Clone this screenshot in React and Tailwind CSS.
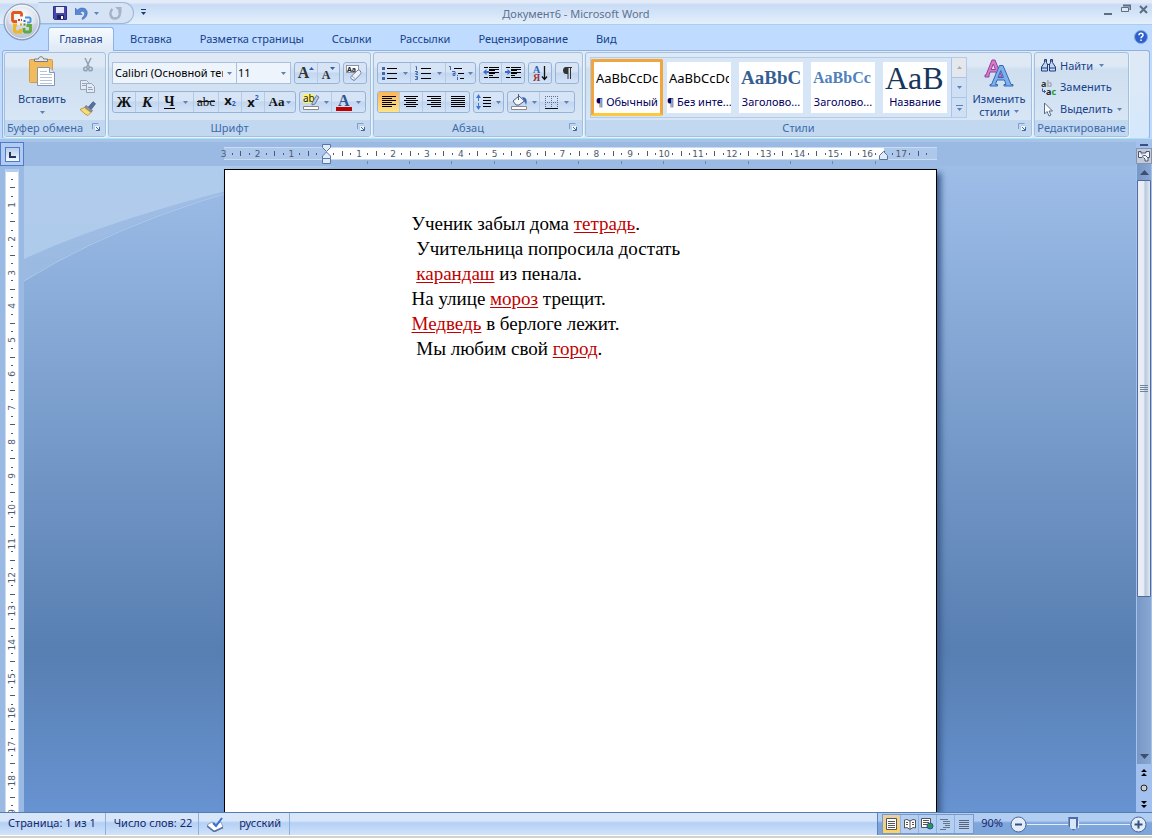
import { useState } from "react";

const tabs = ["Вставка", "Разметка страницы", "Ссылки", "Рассылки", "Рецензирование", "Вид"];

const styleItems = [
    { name: "¶ Обычный", sample: "AaBbCcDc", look: "text-[13px] text-black", active: true },
    { name: "¶ Без инте...", sample: "AaBbCcDc", look: "text-[13px] text-black" },
    { name: "Заголово...", sample: "AaBbCc", look: "font-['Liberation_Serif',serif] text-[19px] font-bold text-[#365f91]" },
    { name: "Заголово...", sample: "AaBbCc", look: "font-['Liberation_Serif',serif] text-[16px] font-bold text-[#4f81bd]" },
    { name: "Название", sample: "AaB", look: "font-['Liberation_Serif',serif] text-[32px] text-[#17365d]" },
];

const lines = [
    ["Ученик забыл дома ", "тетрадь", "."],
    [" Учительница попросила достать", "", ""],
    [" ", "карандаш", " из пенала."],
    ["На улице ", "мороз", " трещит."],
    ["", "Медведь", " в берлоге лежит."],
    [" Мы любим свой ", "город", "."],
];

function Arrow({ className = "text-[#5b83b8]" }) {
    return (
        <svg width="5" height="3" viewBox="0 0 5 3" className={`shrink-0 ${className}`} fill="currentColor">
            <path d="M0 0h5L2.5 3z" />
        </svg>
    );
}

function Launcher() {
    return (
        <button aria-label="Параметры" className="absolute right-[5px] top-[3px] text-[#7f9dc9]">
            <svg width="8" height="8" viewBox="0 0 8 8" fill="none" stroke="currentColor">
                <path d="M.5 6V.5H6.500" />
                <path d="M2.500 7.500v-5h5v5z" fill="#eef5fc" stroke="#b9cfe9" />
                <path d="M4 4l3 3M7.500 4v3.500H4" stroke="#42689c" />
            </svg>
        </button>
    );
}

function Group({ title, launcher, className = "", children }) {
    return (
        <section className={`flex shrink-0 flex-col overflow-hidden rounded-[3px] border border-[#a3c0de] bg-linear-to-b from-[#dee9f5] from-15% via-[#cfdff0] via-20% to-[#dae8f7] shadow-[1px_1px_0_#eaf4fd] ${className}`}>
            <div className="flex min-h-0 flex-1">{children}</div>
            <div className="relative h-4 bg-[#c1d8f0] text-center leading-4 text-[#3e6aaa]">
                <span className={launcher ? "pr-5" : ""}>{title}</span>
                {launcher && <Launcher />}
            </div>
        </section>
    );
}

function Bar({ className = "", children }) {
    return (
        <div className={`flex h-[22px] divide-x divide-[#b4cbe8] overflow-hidden rounded-[3px] border border-[#96b4da] bg-linear-to-b from-[#d6e4f5] from-45% via-[#c3d6ef] via-50% to-[#d3e4f8] ${className}`}>
            {children}
        </div>
    );
}

function Tool({ label, arrow, className = "w-[23px]", children }) {
    return (
        <button aria-label={label} className={`flex h-full items-center justify-center gap-1 ${className}`}>
            {children}
            {arrow && <Arrow />}
        </button>
    );
}

// rows: list of [x, y, width] strokes
function Lines({ rows, w = 16, h = 14, color = "#000", children }) {
    return (
        <svg width={w} height={h} viewBox={`0 0 ${w} ${h}`} className="shrink-0">
            {rows.map(([x, y, len], i) => (
                <rect key={i} x={x} y={y} width={len} height="1" fill={color} />
            ))}
            {children}
        </svg>
    );
}

function OfficeLogo() {
    return (
        <svg width="38" height="38" viewBox="0 0 38 38">
            <defs>
                <radialGradient id="orb" cx=".5" cy=".35" r=".65">
                    <stop offset="0" stopColor="#fff" />
                    <stop offset=".55" stopColor="#dfe5ee" />
                    <stop offset="1" stopColor="#98a9c3" />
                </radialGradient>
            </defs>
            <circle cx="19" cy="19" r="18" fill="url(#orb)" stroke="#8294b2" />
            <path d="M3 20a16 16 0 0 0 32 0c-9 3-23 3-32 0z" fill="#c3cddd" opacity=".6" />
            <circle cx="19" cy="19" r="16.500" fill="none" stroke="#fff" opacity=".7" />
            <g fill="none" strokeWidth="2.800">
                <path d="M14 18.500H10.500L9.500 17.500v-7l1-1h7l1 1v3" stroke="#e2571b" />
                <path d="M22 14.500h4.500l1 1v3l-1 1H24" stroke="#4a94dd" strokeWidth="2" />
                <path d="M14 22h-2.500v6l1 1h5v-3" stroke="#f2b51c" />
                <path d="M23.500 22.500h4V28l-1 1h-4.500l-1-1v-3" stroke="#62a93a" />
            </g>
            <path d="M15 16h2v2h-2zM18 16h1v2h-1z" fill="#d8420f" />
            <path d="M20.500 17h2v2h-2z" fill="#2c6cc0" />
            <path d="M17 20.500h2v2h-2z" fill="#e89b12" />
            <path d="M20.500 20.500h2v2h-2z" fill="#47912a" />
        </svg>
    );
}

function TitleBar() {
    return (
        <header className="relative flex h-[25px] shrink-0 items-center border-b border-[#a9cdf3] bg-linear-to-b from-[#e3ecf8] from-10% via-[#c8dcf5] via-20% to-[#e4effb]">
            <div className="ml-[38px] mt-0.5 flex h-[22px] w-24 items-center rounded-r-full border border-[#9db8db] border-l-transparent bg-[#d5e3f5] pl-3.5">
                <button aria-label="Сохранить" className="mr-2">
                    <svg width="14" height="14" viewBox="0 0 14 14">
                        <path d="M.5.5h13v13h-12l-1-1z" fill="#4846a8" stroke="#312f86" />
                        <path d="M3 1h8v6H3z" fill="#e6eaf9" />
                        <path d="M4 9h7v4H4z" fill="#22205c" />
                        <path d="M8 10h2v3H8z" fill="#fff" />
                    </svg>
                </button>
                <button aria-label="Отменить" className="mr-1.5 flex items-center gap-1.5">
                    <svg width="13" height="13" viewBox="0 0 13 13">
                        <path d="M0 1l2.500 2C5 .5 9 .5 11 2.500c2.500 3 1 8-3.500 10L7 11c2.500-2 3.500-4.500 2-6C8 4 6.500 4.200 5 5.200L7 7.500H0z" fill="#5a86d6" stroke="#3c66b8" strokeWidth=".6" />
                    </svg>
                    <Arrow />
                </button>
                <button aria-label="Повторить" className="ml-1">
                    <svg width="13" height="13" viewBox="0 0 13 13" fill="none">
                        <path d="M3.500 2C0 5 1 11.500 6 11.500c4 0 6-4 4-8" stroke="#a5b2c7" strokeWidth="2.400" />
                        <path d="M6 0h6.500v6.500z" fill="#a5b2c7" />
                    </svg>
                </button>
            </div>
            <button aria-label="Настройка панели быстрого доступа" className="ml-[7px] flex flex-col items-center gap-0.5">
                <span className="h-px w-[5px] bg-[#1c3c75]" />
                <Arrow className="text-[#1c3c75]" />
            </button>
            <h1 className="pointer-events-none absolute inset-x-0 pt-1 text-center leading-4 text-[#5c7290]">
                Документ6 - Microsoft Word
            </h1>
            <div className="ml-auto mr-1 flex items-center gap-2 pb-1.5">
                <button aria-label="Свернуть" className="flex h-3 w-[9px] items-end"><span className="h-0.5 w-2 bg-[#5f6d80]" /></button>
                <button aria-label="Восстановить">
                    <svg width="10" height="10" viewBox="0 0 10 10" fill="none" stroke="#5f6d80">
                        <path d="M2 1.500h7.500V6" strokeWidth="2" />
                        <path d="M.5 3.500h7v4h-7z" fill="#dce8f7" />
                    </svg>
                </button>
                <button aria-label="Закрыть">
                    <svg width="9" height="9" viewBox="0 0 9 9" stroke="#5f6d80" strokeWidth="2">
                        <path d="M1 1l7 7M8 1L1 8" />
                    </svg>
                </button>
            </div>
        </header>
    );
}

function TabRow() {
    return (
        <nav className="flex h-[25px] shrink-0 items-end pl-12 pr-1 text-[#15428b]">
            <button className="z-10 -mb-px h-6 w-[66px] rounded-t-[3px] border border-b-0 border-[#8db2e3] bg-linear-to-b from-[#f5fafe] to-[#dfe9f5]">
                Главная
            </button>
            <div className="ml-0.5 flex h-6">
                {tabs.map((tab) => (
                    <button key={tab} className="px-3.5 pt-0.5">{tab}</button>
                ))}
            </div>
            <button aria-label="Справка" className="mb-1.5 ml-auto">
                <svg width="14" height="14" viewBox="0 0 14 14">
                    <circle cx="7" cy="7" r="6.500" fill="#2b5fd0" stroke="#8aa6d8" />
                    <path d="M5 5.200C5 2.700 9 2.700 9 5.200 9 6.700 7 6.700 7 8.300M7 9.500v1.500" fill="none" stroke="#fff" strokeWidth="1.500" />
                </svg>
            </button>
        </nav>
    );
}

function ClipboardGroup() {
    return (
        <Group title="Буфер обмена" launcher className="w-[102px]">
            <button className="flex w-[74px] flex-col items-center pt-[3px] text-[#15428b]">
                <svg width="28" height="31" viewBox="0 0 28 31">
                    <path d="M2.500 3.500h21a1 1 0 0 1 1 1v21a1 1 0 0 1-1 1h-21a1 1 0 0 1-1-1v-21a1 1 0 0 1 1-1z" fill="#f1bb5c" stroke="#d39b45" />
                    <path d="M6.500 5.500V3h4c0-3 5-3 5 0h4v2.500z" fill="#e9e9e9" stroke="#77797d" />
                    <path d="M9.500 11.500h12l5 5v13h-17z" fill="#fff" stroke="#8396b4" />
                    <path d="M21.500 11.500v5h5" fill="#dce6f4" stroke="#8396b4" />
                    <path d="M12 15.500h7M12 18.500h12M12 21.500h12M12 24.500h12M12 27.500h12" stroke="#b5c3d8" />
                </svg>
                <span className="mt-1 leading-4">Вставить</span>
                <Arrow className="mt-1 text-[#5b83b8]" />
            </button>
            <div className="flex flex-col items-center gap-2 pt-[5px]">
                <button aria-label="Вырезать">
                    <svg width="10" height="14" viewBox="0 0 10 14" fill="none" stroke="#93a1b5" strokeWidth="1.500">
                        <path d="M2 0l4.500 9.500M8 0L3.500 9.500" />
                        <circle cx="2.500" cy="11" r="1.800" />
                        <circle cx="7.500" cy="11" r="1.800" />
                    </svg>
                </button>
                <button aria-label="Копировать">
                    <svg width="15" height="13" viewBox="0 0 15 13" fill="#e3eaf4" stroke="#94a4ba">
                        <path d="M.5.5h6l2 2v7h-8z" />
                        <path d="M2 3.500h4M2 5.500h4" />
                        <path d="M6.500 3.500h5l3 3v6h-8z" />
                        <path d="M8 7.500h4M8 9.500h5" />
                    </svg>
                </button>
                <button aria-label="Формат по образцу">
                    <svg width="17" height="15" viewBox="0 0 17 15">
                        <path d="M9.500 6L14 .7l2.500 2L12.500 8z" fill="#5473a5" stroke="#344f7c" strokeWidth=".7" />
                        <path d="M7 4.500l6.500 5-1.500 2-6.500-5z" fill="#8d93a0" stroke="#5d6677" strokeWidth=".7" />
                        <path d="M5.500 6.500l6.500 5-3 3L6 13 1 8.500z" fill="#f7da7a" stroke="#b08a34" strokeWidth=".8" />
                    </svg>
                </button>
            </div>
        </Group>
    );
}

function FontGroup() {
    const [font, setFont] = useState("Calibri (Основной текст)");
    const [size, setSize] = useState("11");

    return (
        <Group title="Шрифт" launcher className="w-[263px]">
            <div className="flex flex-col gap-[7px] px-[3px] pt-[9px]">
                <div className="flex gap-[3px]">
                    <div className="flex h-[22px] divide-x divide-[#a9c1de] border border-[#a9c1de] bg-[#eef4fb]">
                        <div className="flex w-[124px] items-center gap-1 pr-1">
                            <select
                                aria-label="Шрифт"
                                value={font}
                                onChange={(e) => setFont(e.target.value)}
                                className="w-0 flex-1 appearance-none overflow-hidden pl-0.5 text-[11px] text-clip text-black outline-none"
                            >
                                <option>Calibri (Основной текст)</option>
                                <option>Times New Roman</option>
                            </select>
                            <Arrow />
                        </div>
                        <div className="flex w-[53px] items-center pr-1">
                            <select
                                aria-label="Размер шрифта"
                                value={size}
                                onChange={(e) => setSize(e.target.value)}
                                className="w-0 flex-1 appearance-none pl-px text-[11px] text-black outline-none"
                            >
                                <option>11</option>
                                <option>14</option>
                            </select>
                            <Arrow />
                        </div>
                    </div>
                    <Bar className="font-['Liberation_Serif',serif] font-bold">
                        <Tool label="Увеличить размер">
                            <span className="text-[16px] leading-4 text-[#333]">A</span>
                            <Arrow className="-ml-1 mb-2.5 rotate-180 text-[#2f5fae]" />
                        </Tool>
                        <Tool label="Уменьшить размер" className="w-[21px]">
                            <span className="pt-1 text-[12px] leading-4 text-[#333]">A</span>
                            <Arrow className="-ml-1 mb-2.5 text-[#2f5fae]" />
                        </Tool>
                    </Bar>
                    <Bar>
                        <Tool label="Очистить формат" className="w-[22px]">
                            <svg width="18" height="16" viewBox="0 0 18 16" className="overflow-visible">
                                <rect x=".5" y=".5" width="12" height="7" fill="#fff" stroke="#8796ad" />
                                <text x="1" y="7" fontSize="7" fontWeight="bold" fill="#222">Aa</text>
                                <path d="M5 11.500l7-6.500q1-.5 2 .5l1 2q0 1-1 2l-5 5.500q-1 .5-2 0l-2-1.500q-.7-1 0-2z" fill="#eef2f8" stroke="#6c7f9e" />
                                <path d="M6 11l4 3.500" stroke="#9aa9c0" />
                            </svg>
                        </Tool>
                    </Bar>
                </div>
                <div className="flex gap-[3px] text-[#111]">
                    <Bar className="w-[184px] font-['Liberation_Serif',serif] font-bold">
                        <Tool label="Полужирный"><span className="text-[15px]">Ж</span></Tool>
                        <Tool label="Курсив"><span className="text-[15px] italic">К</span></Tool>
                        <Tool label="Подчеркнутый" arrow className="w-[35px]">
                            <span className="border-b border-black text-[14px] leading-3">Ч</span>
                            <span />
                        </Tool>
                        <Tool label="Зачеркнутый" className="w-[25px]"><span className="text-[13px] font-normal line-through">abc</span></Tool>
                        <Tool label="Подстрочный знак"><span className="flex font-['Noto_Sans',sans-serif] text-[13px] leading-4">x<small className="pt-1 text-[7px] text-[#2f5fae]">2</small></span></Tool>
                        <Tool label="Надстрочный знак"><span className="flex font-['Noto_Sans',sans-serif] text-[13px] leading-4">x<small className="-mt-1 text-[7px] text-[#2f5fae]">2</small></span></Tool>
                        <button aria-label="Регистр" className="flex flex-1 items-center justify-center gap-0.5 text-[13px]">Aa<Arrow /></button>
                    </Bar>
                    <Bar>
                        <Tool label="Цвет выделения" arrow className="w-8">
                            <svg width="17" height="16" viewBox="0 0 17 16" className="overflow-visible">
                                <path d="M0 0h11v9H0z" fill="#fbf36c" />
                                <text x="0" y="8" fontSize="10" fill="#222">ab</text>
                                <path d="M9 9l4.500-7.500 2.500 1.500-4 7-3 1z" fill="#b9c8e2" stroke="#41598a" strokeWidth=".7" />
                                <path d="M.5 12.500h15v3H.5z" fill="#fff" stroke="#8a8a8a" />
                            </svg>
                        </Tool>
                        <Tool label="Цвет текста" arrow className="w-[33px]">
                            <svg width="16" height="17" viewBox="0 0 16 17" className="overflow-visible">
                                <text x="2" y="12" fontSize="16" fontWeight="bold" fontFamily="Liberation Serif" fill="#2e5292">A</text>
                                <path d="M0 13h16v4H0z" fill="#c00000" />
                            </svg>
                        </Tool>
                    </Bar>
                </div>
            </div>
        </Group>
    );
}

function ParagraphGroup() {
    const bullet = [[6, 2, 10], [6, 7, 10], [6, 12, 10]];
    const indent = [[1, 1, 4], [6, 1, 10], [6, 3, 10], [6, 4, 6], [6, 6, 10], [6, 7, 6], [6, 9, 4], [1, 11, 4], [6, 11, 10]];

    return (
        <Group title="Абзац" launcher className="w-[210px]">
            <div className="flex flex-col gap-[7px] px-[3px] pt-[9px]">
                <div className="flex gap-[3px]">
                    <Bar>
                        <Tool label="Маркеры" arrow className="w-[33px] gap-1.5">
                            <Lines rows={bullet}>
                                <path d="M1 1h3v3H1zM1 6h3v3H1zM1 11h3v3H1z" fill="#3f68ad" />
                            </Lines>
                        </Tool>
                        <Tool label="Нумерация" arrow className="w-[35px] gap-1.5">
                            <Lines rows={bullet}>
                                <path d="M.5.500h1v3.500M0 5.500h2.500v1.500H1v1.500h2M0 10.500h2.500v3H0M1 12h1.500" stroke="#3f68ad" fill="none" />
                            </Lines>
                        </Tool>
                        <Tool label="Многоуровневый список" arrow className="w-[29px] gap-0.5">
                            <Lines rows={[[6, 2, 8], [10, 7, 6], [12, 12, 4]]}>
                                <path d="M1 .5h1.500V4M4 5.500h3v4H5V7.500h2M9.500 11v3M9.500 9v1" stroke="#3f68ad" fill="none" />
                            </Lines>
                        </Tool>
                    </Bar>
                    <Bar>
                        <Tool label="Уменьшить отступ" className="w-[22px]">
                            <Lines rows={indent}><path d="M0 6l3.500-3v2H6v2H3.500v2z" fill="#3a6bc6" /></Lines>
                        </Tool>
                        <Tool label="Увеличить отступ" className="w-[22px]">
                            <Lines rows={indent}><path d="M6 6L2.500 3v2H0v2h2.500v2z" fill="#3a6bc6" /></Lines>
                        </Tool>
                    </Bar>
                    <Bar>
                        <Tool label="Сортировка" className="w-[22px]">
                            <svg width="16" height="17" viewBox="0 0 16 17" fontSize="10" fontWeight="bold" fontFamily="Liberation Serif" className="overflow-visible">
                                <text x="1" y="8" fill="#2e5fb4">А</text>
                                <text x="1" y="16" fill="#a03535">Я</text>
                                <path d="M12.500 1v13M10 11.500l2.500 3 2.500-3" stroke="#111" strokeWidth="1.300" fill="none" />
                            </svg>
                        </Tool>
                    </Bar>
                    <Bar>
                        <Tool label="Отобразить все знаки" className="w-[22px]">
                            <svg width="11" height="12" viewBox="0 0 11 12" fill="#333">
                                <path d="M4 0h6v1H9v11H8V1H6.500v11h-1V7H4C0 7 0 0 4 0z" />
                            </svg>
                        </Tool>
                    </Bar>
                </div>
                <div className="flex gap-[3px]">
                    <Bar>
                        <Tool label="По левому краю" className="w-[22px] bg-linear-to-b from-[#fbb45c] to-[#fde489]">
                            <Lines rows={[[1, 1, 14], [1, 3, 10], [1, 5, 14], [1, 7, 10], [1, 9, 14], [1, 11, 10]]} />
                        </Tool>
                        <Tool label="По центру">
                            <Lines rows={[[1, 1, 14], [3, 3, 10], [1, 5, 14], [3, 7, 10], [1, 9, 14], [3, 11, 10]]} />
                        </Tool>
                        <Tool label="По правому краю">
                            <Lines rows={[[1, 1, 14], [5, 3, 10], [1, 5, 14], [5, 7, 10], [1, 9, 14], [5, 11, 10]]} />
                        </Tool>
                        <Tool label="По ширине">
                            <Lines rows={[[1, 1, 14], [1, 3, 14], [1, 5, 14], [1, 7, 14], [1, 9, 14], [1, 11, 14]]} />
                        </Tool>
                    </Bar>
                    <Bar>
                        <Tool label="Междустрочный интервал" arrow className="w-[29px] gap-0.5">
                            <Lines h={16} rows={[[7, 3, 8], [7, 6, 8], [7, 9, 8], [7, 12, 8]]}>
                                <path d="M0 4l2.500-4L5 4H3v3H2V4zM0 12l2.500 4L5 12H3V9H2v3z" fill="#3f78d0" />
                            </Lines>
                        </Tool>
                    </Bar>
                    <Bar>
                        <Tool label="Заливка" arrow className="w-8">
                            <svg width="17" height="16" viewBox="0 0 17 16">
                                <path d="M2 7l6-5 5.500 5-5.500 4-3 0z" fill="#f4f6fa" stroke="#4a5f82" />
                                <path d="M7.500 6V0" stroke="#4a5f82" />
                                <path d="M11 3c5 0 5.500 4 4 8-1-3-2-4-2-4z" fill="#3b6bb8" />
                                <path d="M.5 12.500h15v3H.5z" fill="#fff" stroke="#8a8a8a" />
                            </svg>
                        </Tool>
                        <Tool label="Границы" arrow className="w-[34px] gap-1.5">
                            <svg width="13" height="13" viewBox="0 0 13 13" fill="none" stroke="#59719a" strokeDasharray="1 1">
                                <path d="M.5 0v12M6.500 0v12M12.500 0v12M0 .5h13M0 6.500h13" />
                                <path d="M0 12.500h13" stroke="#111" strokeDasharray="none" />
                            </svg>
                        </Tool>
                    </Bar>
                </div>
            </div>
        </Group>
    );
}

function StylesGroup() {
    return (
        <Group title="Стили" launcher className="w-[447px]">
            <div className="ml-1 mt-1 flex h-[61px] border border-[#b3cbe8] bg-[#d7e6f7]">
                {styleItems.map((item, i) => (
                    <button
                        key={i}
                        className={item.active
                            ? "my-px w-[72px] rounded-[2px] border-[3px] border-[#f0a63c] border-b-[#fcc83c] bg-white"
                            : "mx-1 my-1 w-16 bg-white"}
                    >
                        <span className="flex h-full flex-col overflow-hidden">
                            <span className={`mx-0.5 flex h-8 shrink-0 items-center overflow-hidden whitespace-nowrap leading-8 ${item.look}`}>{item.sample}</span>
                            <span className="whitespace-nowrap text-center leading-4 text-[#000060]">{item.name}</span>
                        </span>
                    </button>
                ))}
                <div className="flex w-[15px] flex-col divide-y divide-[#a9c4e6] border-l border-[#a9c4e6] bg-[#cfe0f5]">
                    <button aria-label="Вверх" className="flex flex-1 items-center justify-center bg-[#e4e8ec]"><Arrow className="rotate-180 text-[#a9adb3]" /></button>
                    <button aria-label="Вниз" className="flex flex-1 items-center justify-center"><Arrow /></button>
                    <button aria-label="Дополнительно" className="flex flex-1 flex-col items-center justify-center gap-0.5">
                        <span className="h-px w-[7px] bg-[#5b83b8]" />
                        <Arrow />
                    </button>
                </div>
            </div>
            <button className="flex flex-1 flex-col items-center pt-[5px] text-[#15428b]">
                <svg width="32" height="30" viewBox="0 0 32 30">
                    <path fillRule="evenodd" d="M2 19v-2h1L9 2h3l6 15h1v2h-5v-2l-1-3H7l-1 3v2zM8 11.500h4.500L10.300 6z" fill="#d07cc9" stroke="#9b3f98" />
                    <path fillRule="evenodd" d="M7 28v-1.500h1.500L16.500 7.500H20L28 26.500h2V28h-9v-1.500h2L21.500 22H14l-1.500 4.500h2V28zM15 19.500h5.500l-2.700-7z" fill="#7fb0ea" stroke="#3469b8" />
                </svg>
                <span className="mt-1 leading-[13px]">Изменить</span>
                <span className="flex items-center gap-1 leading-[13px]">стили <Arrow /></span>
            </button>
        </Group>
    );
}

function EditingGroup() {
    return (
        <Group title="Редактирование" className="w-[95px]">
            <div className="flex flex-col pl-1.5 pt-0.5 text-[#15428b]">
                <button className="flex h-[22px] items-center gap-1">
                    <svg width="15" height="13" viewBox="0 0 15 13" fill="#c3d6f2" stroke="#1f3f7c">
                        <path d="M3.500.5h2v3l1 2v6.500h-6v-4l3-4.500z" />
                        <path d="M9.500.5h2v3l3 4.500v4h-6V5.500l1-2z" />
                        <path d="M6 5.500h3M1 9h5M9 9h5M3 2h3M9 2h3" />
                    </svg>
                    Найти <Arrow className="ml-0.5 text-[#5b83b8]" />
                </button>
                <button className="flex h-[22px] items-center gap-[3px]">
                    <svg width="16" height="16" viewBox="0 0 16 16" fontSize="9" fontWeight="bold" className="overflow-visible">
                        <text x="0" y="7" fill="#333">a<tspan fill="#aaa">b</tspan></text>
                        <text x="5" y="15" fill="#222">a<tspan fill="#1f9a2c">c</tspan></text>
                        <path d="M1.500 8.500v3h3M3 10l1.500 1.500L3 13" fill="none" stroke="#345fae" />
                    </svg>
                    Заменить
                </button>
                <button className="flex h-[22px] items-center gap-1">
                    <svg width="15" height="15" viewBox="0 0 15 15">
                        <path d="M3.500 1v11l2.500-2.500 2 4.500 2-1-2-4h3.500z" fill="#fff" stroke="#5a6b88" />
                    </svg>
                    Выделить <Arrow />
                </button>
            </div>
        </Group>
    );
}

function HorizontalRuler() {
    const marks = Array.from({ length: 84 }, (_, i) => i);

    return (
        <div className="w-[713px]">
            <div className="relative mt-[5px] flex h-[13px] border-y border-[#c9dcf4] bg-[#aec8ec]">
                <div className="ml-[102px] mr-[53px] flex-1 bg-white" />
                {/* scale runs over both the margins and the white text area */}
                <div className="absolute inset-y-0 -left-1 flex w-[712px] items-center font-['DejaVu_Sans',sans-serif] text-[9px] leading-3 text-[#4e5a6e]">
                    {marks.map((i) => (
                        <span key={i} className="flex w-0 flex-1 justify-center whitespace-nowrap">
                            {i % 4 === 0
                                ? i !== 12 && Math.abs(i / 4 - 3)
                                : i % 4 === 2
                                    ? <i className="h-[5px] w-px bg-[#4e5a6e]" />
                                    : <i className="h-0.5 w-px bg-[#4e5a6e]" />}
                        </span>
                    ))}
                </div>
                <svg width="10" height="20" viewBox="0 0 10 20" className="absolute -top-1 left-[98px]" fill="#e3ebf7" stroke="#5577aa">
                    <path d="M.5.5h8v3l-4 4-4-4zM4.500 8l4 4v2.500h-8V12z" />
                    <path d="M.5 14.500h8v5h-8z" />
                </svg>
                <svg width="10" height="9" viewBox="0 0 10 9" className="absolute right-12 top-[3px]" fill="#e3ebf7" stroke="#5577aa">
                    <path d="M4.500.5l4 4v4h-8v-4z" />
                </svg>
            </div>
            <div className="ml-[102px] mt-px flex h-[3px] w-[550px]">
                {marks.slice(0, 13).map((i) => (
                    <span key={i} className="flex-1 border-r border-[#76869f]" />
                ))}
            </div>
        </div>
    );
}

function VerticalRuler() {
    const marks = Array.from({ length: 76 }, (_, i) => i + 1);

    return (
        <div className="w-6 shrink-0 overflow-hidden bg-[#9bbae3] pl-[5px] pt-[3px]">
            <div className="w-3.5 border-x border-[#c9dcf4] border-t-[3px] border-t-[#b4cdf0] bg-white pt-[3px]">
                <div className="flex h-[644px] flex-col items-center font-['DejaVu_Sans',sans-serif] text-[9px] leading-3 text-[#4e5a6e]">
                    {marks.map((i) => (
                        <span key={i} className="flex h-0 flex-1 items-center">
                            {i % 4 === 0
                                ? <b className="rotate-180 font-normal [writing-mode:vertical-rl]">{i / 4}</b>
                                : i % 4 === 2
                                    ? <i className="h-px w-[5px] bg-[#4e5a6e]" />
                                    : <i className="h-px w-0.5 bg-[#4e5a6e]" />}
                        </span>
                    ))}
                </div>
            </div>
        </div>
    );
}

function ScrollBar() {
    return (
        <div className="flex w-4 shrink-0 flex-col items-center bg-[#a3c1ee]">
            <span className="mt-0.5 h-0.5 w-2 bg-[#39507e]" />
            <button aria-label="Линейка" className="mt-0.5 flex h-4 w-4 items-center justify-center border border-[#8594b0] bg-[#c3cbdb]">
                <svg width="12" height="12" viewBox="0 0 12 12" fill="#f4f4f8" stroke="#4c5570">
                    <path d="M.5 1.500h2.500v1.500h5V1.500h3.500v6h-1.500" />
                    <path d="M.5 1.500v6h3.500l1.500-2h2l2.500 2.500v3H7V9L5.500 7.500" />
                </svg>
            </button>
            <div className="flex w-3.5 flex-1 flex-col items-center bg-linear-to-r from-[#7797c6] to-[#89a8d3]">
                <button aria-label="Прокрутить вверх" className="flex h-4 items-center">
                    <svg width="9" height="5" viewBox="0 0 9 5" fill="#3f4e6f"><path d="M0 5h9L4.500 0z" /></svg>
                </button>
                <div className="flex h-[417px] w-3.5 flex-col items-center justify-center gap-px rounded-[1px] border border-[#54699a] bg-linear-to-r from-[#e9eef5] from-45% via-[#b9c9dd] via-60% to-[#dfe8f3]">
                    {[0, 1, 2, 3].map((i) => (
                        <span key={i} className="h-px w-2 bg-[#71829c]" />
                    ))}
                </div>
                <button aria-label="Прокрутить вниз" className="mt-auto flex h-4 items-center">
                    <svg width="9" height="5" viewBox="0 0 9 5" fill="#3f4e6f"><path d="M0 0h9L4.500 5z" /></svg>
                </button>
            </div>
            <button aria-label="Предыдущая страница" className="flex h-4 items-center">
                <svg width="6" height="7" viewBox="0 0 6 7"><path d="M0 3l3-3 3 3zM0 7l3-3 3 3z" /></svg>
            </button>
            <button aria-label="Выбор объекта перехода" className="flex h-4 items-center">
                <svg width="8" height="8" viewBox="0 0 8 8"><circle cx="4" cy="4" r="3" fill="#ccc" stroke="#222" /></svg>
            </button>
            <button aria-label="Следующая страница" className="flex h-4 items-center">
                <svg width="6" height="7" viewBox="0 0 6 7"><path d="M0 0h6L3 3zM0 4h6L3 7z" /></svg>
            </button>
        </div>
    );
}

function Workspace() {
    return (
        <div className="flex min-h-0 flex-1 border-t-[3px] border-[#a9c3e8]">
            <div className="flex min-w-0 flex-1 flex-col">
                <div className="flex h-6 shrink-0 bg-[#9bbae3]">
                    <div className="flex w-6 items-center justify-center border border-[#4d7bd0] bg-[#b3cbee]">
                        <button aria-label="Тип табуляции" className="flex h-[15px] w-[15px] items-center justify-center border border-[#4d7bd0] bg-linear-to-b from-[#b8cdea] to-[#f4f8fd]">
                            <svg width="7" height="7" viewBox="0 0 7 7" fill="none" stroke="#24365c" strokeWidth="2"><path d="M1 1v5h6" /></svg>
                        </button>
                    </div>
                    <div className="flex flex-1 justify-center"><HorizontalRuler /></div>
                </div>
                <div className="flex min-h-0 flex-1">
                    <VerticalRuler />
                    <main className="relative flex flex-1 justify-center overflow-hidden bg-linear-to-b from-[#9ebee8] via-[#587fb2] via-75% to-[#6793d1] pt-[3px]">
                        <svg width="310" height="120" viewBox="0 0 310 120" className="absolute left-0 top-0" fill="none">
                            <path d="M0 0h310Q120 38 0 115z" fill="#a3c0e5" opacity=".6" />
                            <path d="M0 0h310Q110 42 0 93z" fill="#b6d0ee" opacity=".75" />
                            <path d="M0 115Q120 40 310 0" stroke="#adc9ec" />
                        </svg>
                        <article className="relative w-[713px] border border-b-0 border-black bg-white pl-[187px] pt-[41px] font-['Liberation_Serif',serif] text-[19px] leading-[25px] text-black shadow-[4px_4px_6px_#3b5c8c]">
                            {lines.map(([before, word, after], i) => (
                                <p key={i} className="whitespace-pre">
                                    {before}
                                    {word && <u className="text-[#c00000] underline-offset-2">{word}</u>}
                                    {after}
                                </p>
                            ))}
                        </article>
                    </main>
                </div>
            </div>
            <ScrollBar />
        </div>
    );
}

function StatusBar() {
    const [zoom, setZoom] = useState(90);

    return (
        <footer className="flex h-[26px] shrink-0 flex-col border-t border-[#567db1] bg-[#d5d2ca]">
            <div className="flex h-[23px] items-stretch border-b border-white bg-linear-to-b from-[#d7e6f9] from-35% via-[#b4d0f5] via-45% to-[#d2e3f9] text-[#15286b]">
                <button className="border-r border-[#8fb0dc] pb-0.5 pl-2 pr-[9px]">Страница: 1 из 1</button>
                <button className="border-r border-[#8fb0dc] pb-0.5 pl-2 pr-1.5">Число слов: 22</button>
                <button aria-label="Проверка правописания" className="pl-2 pr-[7px]">
                    <svg width="17" height="15" viewBox="0 0 17 15">
                        <path d="M0 8l5-3 4 2 5-2 2 5-8 5z" fill="#fff" stroke="#8ea4c8" />
                        <path d="M0 9l7 5.500 9-4" fill="none" stroke="#54709f" strokeWidth="1.500" />
                        <path d="M6 6l3 3 6-8" fill="none" stroke="#3a6fd0" strokeWidth="2" />
                    </svg>
                </button>
                <button className="border-r border-[#8fb0dc] px-2 pb-0.5">русский</button>
                <div className="ml-auto flex items-center border-l border-[#5b84bd] bg-linear-to-b from-[#b2cdf2] from-35% via-[#7fa6dc] via-45% to-[#7ea5da] pl-1">
                    <div className="flex h-5 divide-x divide-[#8fb1e0] border border-[#7899c8] bg-[#b5cff2]">
                        <button aria-label="Разметка страницы" className="flex w-[18px] items-center justify-center bg-linear-to-b from-[#e9cfa8] to-[#fdd25c]">
                            <svg width="11" height="12" viewBox="0 0 11 12" fill="#fff" stroke="#555"><path d="M.5.5h10v11H.5zM2 3.500h7M2 5.500h7M2 7.500h7M2 9.500h7" /></svg>
                        </button>
                        <button aria-label="Режим чтения" className="flex w-[18px] items-center justify-center">
                            <svg width="12" height="11" viewBox="0 0 12 11" fill="#fff" stroke="#555"><path d="M.5 1l2.500-.5L6 2l3-1.500 2.500.5v8L9 8.500 6 10.500 3 8.500.5 9zM6 2v8M2 3.500h2M2 5.500h2M8 3.500h2M8 5.500h2" /></svg>
                        </button>
                        <button aria-label="Веб-документ" className="flex w-[18px] items-center justify-center">
                            <svg width="13" height="12" viewBox="0 0 13 12" fill="#fff" stroke="#555"><path d="M.5.5h9v9h-9zM2 2.500h6M2 4.500h6M2 6.500h4" /><circle cx="9" cy="8" r="3" fill="#2f9060" stroke="#24599a" /></svg>
                        </button>
                        <button aria-label="Структура" className="flex w-[18px] items-center justify-center">
                            <Lines w={11} h={11} color="#66758c" rows={[[0, 0, 8], [3, 2, 7], [3, 4, 7], [5, 6, 5], [3, 8, 7], [0, 10, 6]]} />
                        </button>
                        <button aria-label="Черновик" className="flex w-[18px] items-center justify-center">
                            <Lines w={10} h={9} color="#55647b" rows={[[0, 0, 10], [0, 2, 10], [0, 4, 10], [0, 6, 10], [0, 8, 10]]} />
                        </button>
                    </div>
                    <button className="w-9 pb-0.5 text-center">{zoom}%</button>
                    <button aria-label="Уменьшить" onClick={() => setZoom(zoom - 10)}>
                        <svg width="17" height="17" viewBox="0 0 17 17"><circle cx="8.500" cy="8.500" r="7.500" fill="#e3edfa" stroke="#48659a" /><path d="M5 8.500h7" stroke="#35517f" strokeWidth="2" /></svg>
                    </button>
                    <input
                        type="range"
                        aria-label="Масштаб"
                        min="10"
                        max="190"
                        value={zoom}
                        onChange={(e) => setZoom(Number(e.target.value))}
                        className="h-4 w-[103px] appearance-none bg-[linear-gradient(#e4eefb,#e4eefb),linear-gradient(#e4eefb,#e4eefb)] bg-[size:100%_1px,1px_7px] bg-center bg-no-repeat [&::-webkit-slider-thumb]:h-3.5 [&::-webkit-slider-thumb]:w-2.5 [&::-webkit-slider-thumb]:appearance-none [&::-webkit-slider-thumb]:border-2 [&::-webkit-slider-thumb]:border-[#4a6ba5] [&::-webkit-slider-thumb]:bg-[#d9e6f8] [&::-webkit-slider-thumb]:[clip-path:polygon(0_0,100%_0,100%_65%,50%_100%,0_65%)]"
                    />
                    <button aria-label="Увеличить" onClick={() => setZoom(zoom + 10)} className="mr-[5px]">
                        <svg width="17" height="17" viewBox="0 0 17 17"><circle cx="8.500" cy="8.500" r="7.500" fill="#e3edfa" stroke="#48659a" /><path d="M4.500 8.500h8M8.500 4.500v8" stroke="#35517f" strokeWidth="2" /></svg>
                    </button>
                </div>
            </div>
        </footer>
    );
}

export default function App() {
    return (
        <div className="relative flex h-screen flex-col overflow-hidden bg-[#bfdbff] font-['Noto_Sans',sans-serif] text-[11px]">
            <TitleBar />
            <TabRow />
            <div className="mx-0.5 flex h-[89px] shrink-0 gap-0.5 rounded-[3px] border border-[#8db2e3] border-b-[#a5e6f5] bg-linear-to-b from-[#dfe9f5] to-[#d5e8fc] px-px py-px">
                <ClipboardGroup />
                <FontGroup />
                <ParagraphGroup />
                <StylesGroup />
                <EditingGroup />
            </div>
            <Workspace />
            <StatusBar />
            <button aria-label="Кнопка Office" className="absolute left-[3px] top-[3px] z-20 rounded-full">
                <OfficeLogo />
            </button>
        </div>
    );
}
